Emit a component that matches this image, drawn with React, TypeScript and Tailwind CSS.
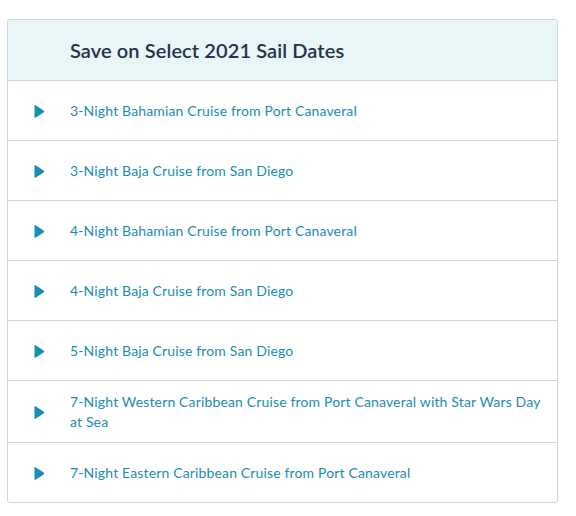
import { ReactNode } from 'react'

const cruises = [
  '3-Night Bahamian Cruise from Port Canaveral',
  '3-Night Baja Cruise from San Diego',
  '4-Night Bahamian Cruise from Port Canaveral',
  '4-Night Baja Cruise from San Diego',
  '5-Night Baja Cruise from San Diego',
  '7-Night Western Caribbean Cruise from Port Canaveral with Star Wars Day at Sea',
  '7-Night Eastern Caribbean Cruise from Port Canaveral',
]

function Caret() {
  return (
    <svg width="11" height="15" viewBox="0 0 11 15" className="shrink-0">
      <path
        d="M1.5 1.2 L9.6 6.6 Q10.6 7.5 9.6 8.4 L1.5 13.8 Q0.5 14.3 0.5 13 L0.5 2 Q0.5 0.7 1.5 1.2 Z"
        fill="#1b8db3"
      />
    </svg>
  )
}

function Row({ children }: { children: ReactNode }) {
  return (
    <a
      href="#"
      className="flex items-center min-h-[60px] border-t border-[#cfd5dc] pl-[26px] pr-4 pt-[11px] pb-[10px] hover:bg-[#f7fbfc]"
    >
      <Caret />
      <span className="ml-[25px] text-[14px] leading-[20px] tracking-[0.15px] text-[#1b8db3]">{children}</span>
    </a>
  )
}

export default function App() {
  return (
    <div className="min-h-screen bg-white pt-[19px] pl-[7px] pr-[19px]" style={{ fontFamily: 'Lato, "Open Sans", sans-serif' }}>
      <div className="w-[551px] border border-[#cfd5dc] rounded-[3px] overflow-hidden">
        {/* Header */}
        <div className="bg-[#e8f6f8] h-[60px] flex items-center pl-[62px] pb-[1px]">
          <h2 className="text-[20px] font-semibold text-[#253249] tracking-[0.1px]">Save on Select 2021 Sail Dates</h2>
        </div>

        {cruises.map(c => (
          <Row key={c}>{c}</Row>
        ))}
      </div>
    </div>
  )
}
